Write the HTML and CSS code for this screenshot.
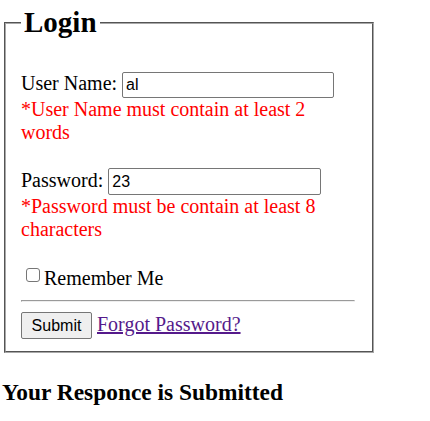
FILE: index.html
```html
<!DOCTYPE html>
<html>
<head>
<meta charset="utf-8">
<link rel="stylesheet" href="styles.css">
</head>
<body>
<form class="login-form">
  <fieldset class="login-box">
    <legend class="login-title">Login</legend>
    <div class="field-row first">User Name: <input class="text-input" type="text" value="al"></div>
    <div class="error">*User Name must contain at least 2 words</div>
    <div class="field-row second">Password: <input class="text-input pw" type="text" value="23"></div>
    <div class="error">*Password must be contain at least 8 characters</div>
    <div class="remember-row"><input class="check" type="checkbox">Remember Me</div>
    <hr class="divider">
    <div class="action-row"><button class="submit-btn" type="button">Submit</button> <a class="forgot" href="#">Forgot Password?</a></div>
  </fieldset>
</form>
<h3 class="result">Your Responce is Submitted</h3>
</body>
</html>
```

FILE: styles.css
```css
body {
  margin: 0;
  font-family: "Liberation Serif", "Times New Roman", serif;
  font-size: 20px;
  color: #000;
  background: #fff;
}

.login-form {
  margin: 0;
}

.login-box {
  box-sizing: border-box;
  width: 370px;
  margin: 6px 0 0 4px;
  padding: 0 17px 12px 15px;
  border: 2px groove #a8a8a8;
}

.login-title {
  padding: 0 3px;
  font-size: 29px;
  font-weight: bold;
}

.field-row.first {
  margin-top: 33px;
}

.field-row.second {
  margin-top: 24px;
}

.text-input {
  box-sizing: border-box;
  width: 212px;
  height: 26px;
  padding: 3px 3px;
  margin: 0;
  border: 1px solid #767676;
  border-radius: 2px;
  font-family: "Liberation Sans", Arial, sans-serif;
  font-size: 16px;
}

.text-input.pw {
  width: 213px;
  height: 27px;
}

.error {
  color: #ff0000;
}

.remember-row {
  margin-top: 26px;
}

.check {
  -webkit-appearance: none;
  appearance: none;
  box-sizing: border-box;
  width: 14px;
  height: 14px;
  margin: 0 4px 3px 5px;
  border: 1px solid #767676;
  border-radius: 3px;
  background: #fff;
  vertical-align: baseline;
}

.divider {
  margin: 10px 0;
}

.submit-btn {
  box-sizing: border-box;
  height: 27px;
  width: 71px;
  margin: 0;
  padding: 3px 8px;
  border: 1px solid #767676;
  border-radius: 2px;
  background: #efefef;
  font-family: "Liberation Sans", Arial, sans-serif;
  font-size: 16px;
  color: #000;
}

.forgot {
  color: #551a8b;
}

.result {
  margin: 26px 0 0 2px;
  font-size: 23.4px;
  font-weight: bold;
}
```
